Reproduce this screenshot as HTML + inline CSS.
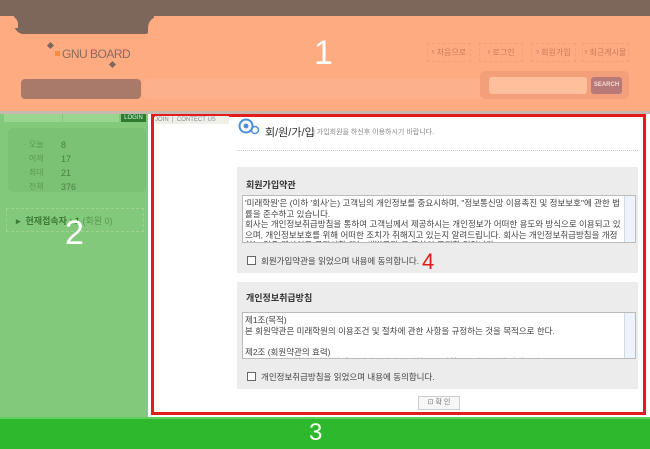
<!DOCTYPE html>
<html><head><meta charset="utf-8"><style>
*{margin:0;padding:0;box-sizing:border-box}
body{width:650px;height:449px;position:relative;overflow:hidden;background:#fff;font-family:"Liberation Sans","Noto Sans CJK KR",sans-serif;font-size:9px;color:#444}
.a{position:absolute}
.btn{position:absolute;top:43px;height:19px;border:1px dashed #f3a07a;color:#c97a5a;font-size:8px;line-height:17px;text-align:center}
.box{position:absolute;left:237px;width:401px;background:#ececec}
.ta{position:absolute;left:5px;right:2px;background:#fff;border:1px solid #bbb;overflow:hidden;padding:2px 14px 0 2px;font-size:8.5px;line-height:10.5px;color:#444}
.sb{position:absolute;right:0;top:0;bottom:0;width:11px;background:#eef2fa;border-left:1px solid #cdd}
.cb{position:absolute;left:10px;width:9px;height:9px;border:1px solid #666;background:#fff}
</style></head><body>
<div class="a" style="left:0;top:0;width:650px;height:111px;background:#ffab82"></div>
<div class="a" style="left:0;top:0;width:650px;height:16px;background:#7d675b"></div>
<div class="a" style="left:14px;top:10px;width:140px;height:24px;background:#7d675b;border-radius:0 0 10px 10px"></div>
<div class="a" style="left:0;top:16px;width:18px;height:12px;background:#ffab82;border-radius:0 8px 0 0"></div>
<div class="a" style="left:148px;top:16px;width:20px;height:18px;background:#ffab82;border-radius:12px 0 0 0"></div>
<div class="a" style="left:55px;top:51px;width:5px;height:5px;background:#ff8a3d"></div>
<div class="a" style="left:48px;top:43px;width:5px;height:5px;background:#7d675b;transform:rotate(45deg)"></div>
<div class="a" style="left:110px;top:62px;width:5px;height:5px;background:#7d675b;transform:rotate(45deg)"></div>
<div class="a" style="left:62px;top:47px;font-size:12px;color:#8a6b5c;letter-spacing:-0.5px">GNU BOARD</div>
<div class="a" style="left:314px;top:34px;font-size:34px;color:#fff">1</div>
<div class="btn" style="left:427px;width:44px">ᵞ 처음으로</div>
<div class="btn" style="left:479px;width:44px">ᵞ 로그인</div>
<div class="btn" style="left:531px;width:45px">ᵞ 회원가입</div>
<div class="btn" style="left:582px;width:47px">ᵞ 최근게시물</div>
<div class="a" style="left:21px;top:79px;width:120px;height:20px;background:#a9796a;border-radius:4px"></div>
<div class="a" style="left:143px;top:79px;width:486px;height:20px;background:#fdb08c;border-radius:4px"></div>
<div class="a" style="left:480px;top:71px;width:149px;height:28px;background:#f29f7a;border-radius:5px"></div>
<div class="a" style="left:489px;top:77px;width:98px;height:17px;background:#ffbe9c;border-radius:3px"></div>
<div class="a" style="left:591px;top:77px;width:31px;height:17px;background:#b77a78;border-radius:3px;color:#f6d9d0;font-size:6px;font-weight:bold;text-align:center;line-height:17px">SEARCH</div>
<div class="a" style="left:0;top:111px;width:650px;height:3px;background:#c9b8b0"></div>
<div class="a" style="left:0;top:114px;width:148px;height:303px;background:#83c97b"></div>
<div class="a" style="left:4px;top:114px;width:58px;height:8px;background:#9ad690"></div>
<div class="a" style="left:63px;top:114px;width:56px;height:8px;background:#9ad690"></div>
<div class="a" style="left:121px;top:114px;width:25px;height:8px;background:#2f7a2f;color:#cfe;font-size:6px;line-height:8px;text-align:center">LOGIN</div>
<div class="a" style="left:8px;top:128px;width:138px;height:64px;background:#7cc274;border-radius:5px"></div>
<div class="a" style="left:24px;top:138px;line-height:14px;color:#5a9a52;font-size:8px">·&nbsp;오늘<br>·&nbsp;어제<br>·&nbsp;최대<br>·&nbsp;전체</div>
<div class="a" style="left:61px;top:138px;line-height:14px;color:#4a7f44;font-size:9px">8<br>17<br>21<br>376</div>
<div class="a" style="left:6px;top:208px;width:138px;height:24px;border:1px dashed #9bd393"></div>
<div class="a" style="left:16px;top:214px;font-size:9px;color:#3c7a36;font-weight:bold">▸&nbsp; 현재접속자 : 1 <span style="font-weight:normal;color:#5a9a52">(회원 0)</span></div>
<div class="a" style="left:65px;top:214px;font-size:34px;color:#fff">2</div>
<div class="a" style="left:151px;top:114px;width:495px;height:301px;border:3px solid #e41b1b"></div>
<div class="a" style="left:155px;top:116px;width:74px;height:8px;background:#eef0e8;color:#889;font-size:6px;line-height:8px">JOIN &nbsp;| &nbsp;CONTECT US</div>
<svg class="a" style="left:238px;top:118px" width="22" height="18"><circle cx="8" cy="8" r="6.5" fill="none" stroke="#4c8ed8" stroke-width="2"/><circle cx="8" cy="8" r="2.5" fill="#4c8ed8"/><circle cx="17" cy="12" r="3.5" fill="none" stroke="#4c8ed8" stroke-width="1.5"/></svg>
<div class="a" style="left:265px;top:124px;font-size:11px;color:#333">회/원/가/입</div>
<div class="a" style="left:313px;top:127px;font-size:7px;color:#888">| 가입회원을 하신후 이용하시기 바랍니다.</div>
<div class="a" style="left:237px;top:150px;width:401px;border-top:1px dotted #ccc"></div>
<div class="box" style="top:167px;height:106px">
<div class="a" style="left:9px;top:11px;font-size:9px;font-weight:bold;color:#333">회원가입약관</div>
<div class="ta" style="top:28px;height:48px">'미래학원'은 (이하 '회사'는) 고객님의 개인정보를 중요시하며, "정보통신망 이용촉진 및 정보보호"에 관한 법률을 준수하고 있습니다.<br>회사는 개인정보취급방침을 통하여 고객님께서 제공하시는 개인정보가 어떠한 용도와 방식으로 이용되고 있으며, 개인정보보호를 위해 어떠한 조치가 취해지고 있는지 알려드립니다. 회사는 개인정보취급방침을 개정하는 경우 웹사이트 공지사항(또는 개별공지)를 통하여 공지할 것입니다.<div class="sb"></div></div>
<div class="cb" style="top:89px"></div>
<div class="a" style="left:24px;top:88px;font-size:8.5px">회원가입약관을 읽었으며 내용에 동의합니다.</div>
</div>
<div class="a" style="left:422px;top:249px;font-size:22px;color:#e41b1b">4</div>
<div class="box" style="top:282px;height:107px">
<div class="a" style="left:9px;top:9px;font-size:9px;font-weight:bold;color:#333">개인정보취급방침</div>
<div class="ta" style="top:30px;height:47px">제1조(목적)<br>본 회원약관은 미래학원의 이용조건 및 절차에 관한 사항을 규정하는 것을 목적으로 한다.<br><br>제2조 (회원약관의 효력)<br>본 약관은 미래학원 회원 가입시 회원들에게 공지하고 동의함으로서 효력이 발생한다.<div class="sb"></div></div>
<div class="cb" style="top:90px"></div>
<div class="a" style="left:24px;top:89px;font-size:8.5px">개인정보취급방침을 읽었으며 내용에 동의합니다.</div>
</div>
<div class="a" style="left:418px;top:396px;width:42px;height:14px;border:1px solid #ccc;background:#f7f7f7;font-size:7px;color:#777;text-align:center;line-height:12px">⊡ 확 인</div>
<div class="a" style="left:0;top:417px;width:650px;height:32px;background:#2eb82e"></div>
<div class="a" style="left:0;top:417px;width:650px;height:2px;background:#5fcf5f"></div>
<div class="a" style="left:309px;top:419px;font-size:24px;color:#fff">3</div>
</body></html>
